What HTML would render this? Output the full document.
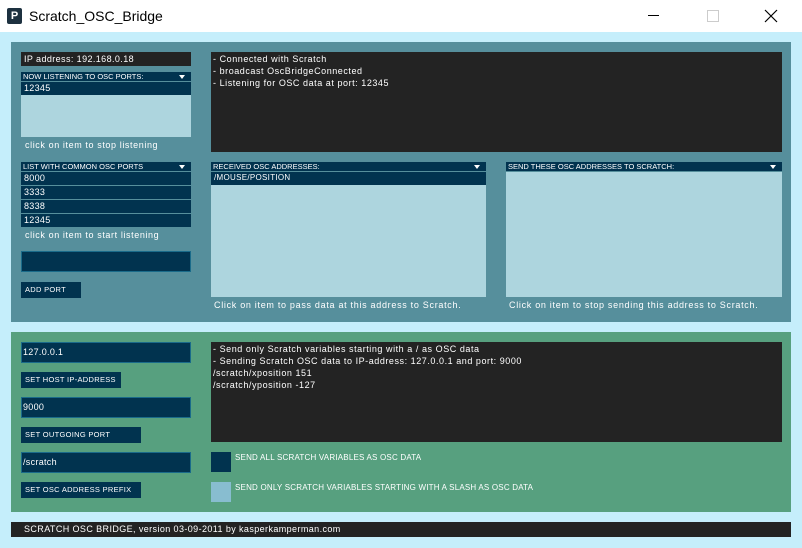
<!DOCTYPE html>
<html><head><style>
*{margin:0;padding:0;box-sizing:border-box}
body{width:802px;height:548px;background:#c5eefb;position:relative;overflow:hidden;font-family:"Liberation Sans",sans-serif;}
.a{position:absolute}
.t{font-size:9px;color:#fff;line-height:1;white-space:nowrap;letter-spacing:.6px}
.dk{background:#232323}
.nv{background:#01334f}
.lt{background:#add5de}
.hd{background:#01334f;font-size:7.5px;color:#fff;padding-left:2px;line-height:10px;white-space:nowrap}
.hd:after{content:"";position:absolute;right:6px;top:3px;border:3px solid transparent;border-top:4px solid #fff;border-bottom:0}
.it{background:#01334f;color:#fff;font-size:9px;line-height:12px;padding-left:3px;letter-spacing:.3px}
.btn{background:#01334f;color:#fff;font-size:7.5px;line-height:16px;padding-left:4px;letter-spacing:.3px;white-space:nowrap}
.fld{background:#01334f;border:1px solid #1a6b8a;color:#fff;font-size:9px;padding-left:1px;line-height:19px;letter-spacing:.3px}
.con{background:#232323;color:#fff;font-size:9px;line-height:12px;padding:1px 2px;letter-spacing:.55px;white-space:nowrap}
</style></head><body>
<div class="a" style="left:0;top:0;width:802px;height:32px;background:#fff"></div>
<div class="a" style="left:7px;top:8px;width:15px;height:16px;background:#1d3140;border-radius:2px;color:#fff;font-size:11px;font-weight:bold;text-align:center;line-height:16px">P</div>
<div class="a" style="left:29px;top:8px;font-size:14px;color:#000">Scratch_OSC_Bridge</div>
<div class="a" style="left:648px;top:15px;width:11px;height:1px;background:#000"></div>
<div class="a" style="left:707px;top:10px;width:12px;height:12px;border:1px solid #ccc"></div>
<svg class="a" style="left:764px;top:9px" width="14" height="14"><path d="M1 1L13 13M13 1L1 13" stroke="#000" stroke-width="1.2"/></svg>

<div class="a" style="left:11px;top:42px;width:780px;height:280px;background:#568f9c"></div>
<div class="a dk t" style="left:21px;top:52px;width:170px;height:14px;padding:3px 3px;letter-spacing:.4px">IP address: 192.168.0.18</div>
<div class="a hd" style="left:21px;top:72px;width:170px;height:9px;line-height:9px">NOW LISTENING TO OSC PORTS:</div>
<div class="a lt" style="left:21px;top:82px;width:170px;height:55px"></div>
<div class="a it" style="left:21px;top:82px;width:170px;height:13px">12345</div>
<div class="a t" style="left:25px;top:141px">click on item to stop listening</div>
<div class="a hd" style="left:21px;top:162px;width:170px;height:9px;line-height:9px">LIST WITH COMMON OSC PORTS</div>
<div class="a it" style="left:21px;top:172px;width:170px;height:13px">8000</div>
<div class="a it" style="left:21px;top:186px;width:170px;height:13px">3333</div>
<div class="a it" style="left:21px;top:200px;width:170px;height:13px">8338</div>
<div class="a it" style="left:21px;top:214px;width:170px;height:13px">12345</div>
<div class="a t" style="left:25px;top:231px">click on item to start listening</div>
<div class="a fld" style="left:21px;top:251px;width:170px;height:21px"></div>
<div class="a btn" style="left:21px;top:282px;width:60px;height:16px;line-height:16px">ADD PORT</div>

<div class="a con" style="left:211px;top:52px;width:571px;height:100px">- Connected with Scratch<br>- broadcast OscBridgeConnected<br>- Listening for OSC data at port: 12345</div>
<div class="a hd" style="left:211px;top:162px;width:275px;height:9px;line-height:9px">RECEIVED OSC ADDRESSES:</div>
<div class="a lt" style="left:211px;top:172px;width:275px;height:125px"></div>
<div class="a it" style="left:211px;top:172px;width:275px;height:13px;font-size:8px">/MOUSE/POSITION</div>
<div class="a t" style="left:214px;top:301px;letter-spacing:.7px">Click on item to pass data at this address to Scratch.</div>
<div class="a hd" style="left:506px;top:162px;width:276px;height:9px;line-height:9px">SEND THESE OSC ADDRESSES TO SCRATCH:</div>
<div class="a lt" style="left:506px;top:172px;width:276px;height:125px"></div>
<div class="a t" style="left:509px;top:301px;letter-spacing:.7px">Click on item to stop sending this address to Scratch.</div>

<div class="a" style="left:11px;top:332px;width:780px;height:180px;background:#57a07f"></div>
<div class="a fld" style="left:21px;top:342px;width:170px;height:21px">127.0.0.1</div>
<div class="a btn" style="left:21px;top:372px;width:100px;height:16px">SET HOST IP-ADDRESS</div>
<div class="a fld" style="left:21px;top:397px;width:170px;height:21px">9000</div>
<div class="a btn" style="left:21px;top:427px;width:120px;height:16px">SET OUTGOING PORT</div>
<div class="a fld" style="left:21px;top:452px;width:170px;height:21px">/scratch</div>
<div class="a btn" style="left:21px;top:482px;width:120px;height:16px">SET OSC ADDRESS PREFIX</div>
<div class="a con" style="left:211px;top:342px;width:571px;height:100px">- Send only Scratch variables starting with a / as OSC data<br>- Sending Scratch OSC data to IP-address: 127.0.0.1 and port: 9000<br>/scratch/xposition 151<br>/scratch/yposition -127</div>
<div class="a nv" style="left:211px;top:452px;width:20px;height:20px"></div>
<div class="a t" style="left:235px;top:454px;font-size:8px;letter-spacing:.2px">SEND ALL SCRATCH VARIABLES AS OSC DATA</div>
<div class="a" style="left:211px;top:482px;width:20px;height:20px;background:#88bdd0"></div>
<div class="a t" style="left:235px;top:484px;font-size:8px;letter-spacing:.2px">SEND ONLY SCRATCH VARIABLES STARTING WITH A SLASH AS OSC DATA</div>

<div class="a dk t" style="left:11px;top:522px;width:780px;height:15px;padding:3px 0 0 13px;letter-spacing:.4px">SCRATCH OSC BRIDGE, version 03-09-2011 by kasperkamperman.com</div>
</body></html>
